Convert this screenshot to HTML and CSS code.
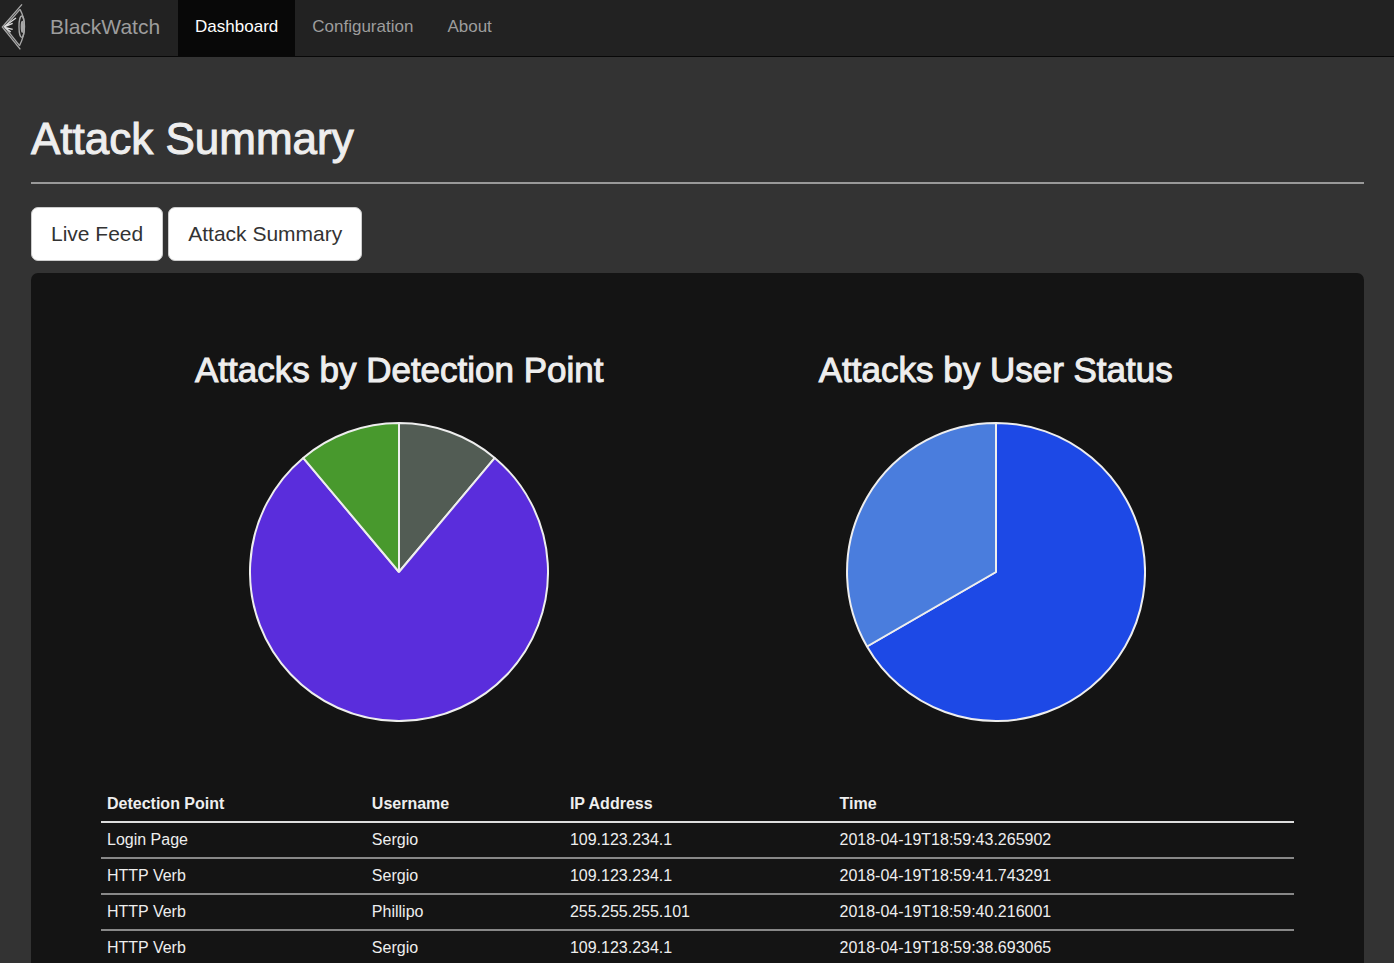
FILE: index.html
```html
<!DOCTYPE html>
<html lang="en">
<head>
    <meta charset="UTF-8">
    <title>BlackWatch</title>
    <link rel="stylesheet" href="styles.css">
</head>
<body>

<nav class="navbar">
    <a class="logo" href="#" aria-label="BlackWatch home">
        <svg width="28" height="56" viewBox="0 0 84 168" fill="none" stroke="#a8a8a8" stroke-width="4">
            <path d="M66 13L7 81L61 148"/>
            <path d="M60 28L14 81L58 136"/>
            <path d="M60 28Q88 80 58 138"/>
            <ellipse cx="65" cy="80" rx="8" ry="32"/>
            <ellipse cx="67" cy="80" rx="3" ry="16" fill="#a8a8a8"/>
            <path stroke="#ddd" d="M12 80L48 54M14 80L38 70M14 82L38 88M14 82L32 96"/>
        </svg>
    </a>
    <a class="brand" href="#">BlackWatch</a>
    <ul class="nav">
        <li><a class="active" href="#">Dashboard</a></li>
        <li><a href="#">Configuration</a></li>
        <li><a href="#">About</a></li>
    </ul>
</nav>

<main class="container">
    <h1 class="page-header">Attack Summary</h1>

    <div class="buttons">
        <button class="btn" type="button">Live Feed</button>
        <button class="btn" type="button">Attack Summary</button>
    </div>

    <div class="panel">
        <div class="charts">
            <section class="chart">
                <h2>Attacks by Detection Point</h2>
                <svg class="pie" viewBox="-150 -150 300 300">
                    <path fill="#525c54" d="M0 0V-149A149 149 0 0 1 95.8 -114.1Z"/>
                    <path fill="#5a2ddc" d="M0 0L95.8 -114.1A149 149 0 1 1 -95.8 -114.1Z"/>
                    <path fill="#48992d" d="M0 0L-95.8 -114.1A149 149 0 0 1 0 -149Z"/>
                </svg>
            </section>
            <section class="chart">
                <h2>Attacks by User Status</h2>
                <svg class="pie" viewBox="-150 -150 300 300">
                    <path fill="#1d49e6" d="M0 0V-149A149 149 0 1 1 -129 74.5Z"/>
                    <path fill="#4a7ddd" d="M0 0L-129 74.5A149 149 0 0 1 0 -149Z"/>
                </svg>
            </section>
        </div>

        <table class="attacks">
            <thead>
                <tr>
                    <th class="col-point">Detection Point</th>
                    <th class="col-user">Username</th>
                    <th class="col-ip">IP Address</th>
                    <th>Time</th>
                </tr>
            </thead>
            <tbody>
                <tr>
                    <td>Login Page</td>
                    <td>Sergio</td>
                    <td>109.123.234.1</td>
                    <td>2018-04-19T18:59:43.265902</td>
                </tr>
                <tr>
                    <td>HTTP Verb</td>
                    <td>Sergio</td>
                    <td>109.123.234.1</td>
                    <td>2018-04-19T18:59:41.743291</td>
                </tr>
                <tr>
                    <td>HTTP Verb</td>
                    <td>Phillipo</td>
                    <td>255.255.255.101</td>
                    <td>2018-04-19T18:59:40.216001</td>
                </tr>
                <tr>
                    <td>HTTP Verb</td>
                    <td>Sergio</td>
                    <td>109.123.234.1</td>
                    <td>2018-04-19T18:59:38.693065</td>
                </tr>
            </tbody>
        </table>
    </div>
</main>

</body>
</html>
```
FILE: styles.css
```css
* {
    box-sizing: border-box;
}

body {
    margin: 0;
    background-color: #333;
    color: #eee;
    font-family: "Helvetica Neue", Helvetica, "Liberation Sans", Arial, sans-serif;
    font-size: 16px;
}

.navbar {
    display: flex;
    background-color: #222;
    border-bottom: 1px solid #080808;
}

.navbar a {
    color: #9d9d9d;
    text-decoration: none;
}

.logo svg {
    display: block;
}

.brand {
    padding: 0 18px 0 22px;
    font-size: 21px;
    line-height: 54px;
}

.nav {
    display: flex;
    margin: 0;
    padding: 0;
    list-style: none;
}

.nav a {
    display: block;
    height: 56px;
    padding: 0 17px;
    font-size: 17px;
    line-height: 54px;
}

.navbar .active {
    background-color: #080808;
    color: #fff;
}

.container {
    padding: 56px 30px 0 31px;
}

.page-header {
    margin: 0 0 23px;
    padding-bottom: 17px;
    border-bottom: 2px solid #999;
    font-size: 44px;
    line-height: 52px;
}

.page-header,
.chart h2 {
    font-weight: 400;
    -webkit-text-stroke: 1px #eee;
}

.buttons {
    display: flex;
    gap: 5px;
    margin-bottom: 12px;
}

.btn {
    height: 54px;
    padding: 0 19px;
    border: 1px solid #ccc;
    border-radius: 7px;
    background-color: #fff;
    color: #333;
    font-family: inherit;
    font-size: 21px;
}

.panel {
    padding: 77px 70px;
    border-radius: 7px;
    background-color: #141414;
}

.charts {
    display: grid;
    grid-template-columns: 1fr 1fr;
    margin-bottom: 65px;
}

.chart {
    text-align: center;
}

.chart h2 {
    margin: 0 0 32px;
    font-size: 35px;
    line-height: 40px;
}

.pie {
    display: block;
    width: 300px;
    margin: auto;
    stroke: #eee;
    stroke-width: 2;
    stroke-linejoin: bevel;
}

.attacks {
    width: 100%;
    border-spacing: 0;
    table-layout: fixed;
    text-align: left;
}

.attacks th,
.attacks td {
    height: 36px;
    padding: 0 6px;
    border-bottom: 2px solid #888;
}

.attacks th {
    border-color: #ddd;
}

.col-point {
    width: 22.2%;
}

.col-user {
    width: 16.6%;
}

.col-ip {
    width: 22.6%;
}
```
